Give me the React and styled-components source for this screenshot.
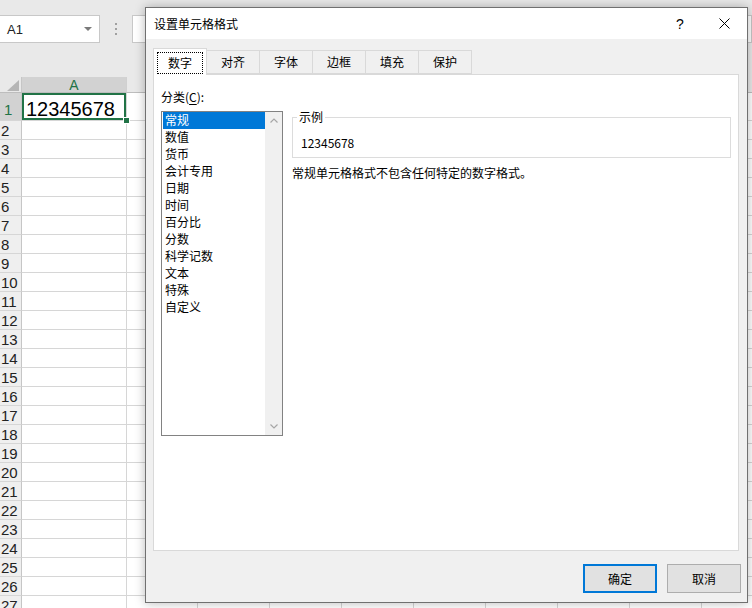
import React from "react";
import styled, { createGlobalStyle } from "styled-components";

const GlobalStyle = createGlobalStyle`
  html, body {
    margin: 0;
    padding: 0;
  }
  body {
    width: 752px;
    height: 608px;
    overflow: hidden;
    background: #ffffff;
    font-family: "Liberation Sans", Arial, sans-serif;
  }
`;

const Screen = styled.div`
  position: relative;
  width: 752px;
  height: 608px;
  overflow: hidden;
  background: #ffffff;
`;

/* ---------- spreadsheet backdrop ---------- */

const Toolbar = styled.div`
  display: flex;
  align-items: flex-start;
  height: 77px;
  padding-top: 15px;
  box-sizing: border-box;
  background: #e9e9e9;
`;

const NameBox = styled.div`
  display: flex;
  align-items: center;
  justify-content: space-between;
  width: 101px;
  height: 28px;
  margin-left: -1px;
  box-sizing: border-box;
  padding: 0 7px 0 7px;
  background: #ffffff;
  border: 1px solid #c8c8c8;
  font-size: 13px;
  color: #222;
`;

const Caret = styled.span`
  width: 0;
  height: 0;
  border-left: 4px solid transparent;
  border-right: 4px solid transparent;
  border-top: 4px solid #7a7a7a;
`;

const Dots = styled.div`
  display: flex;
  flex-direction: column;
  align-items: center;
  justify-content: center;
  gap: 3px;
  width: 32px;
  height: 28px;
  & span {
    width: 2px;
    height: 2px;
    background: #a0a0a0;
  }
`;

const FormulaBox = styled.div`
  flex: 1;
  height: 28px;
  box-sizing: border-box;
  background: #ffffff;
  border: 1px solid #c8c8c8;
`;

const Grid = styled.div`
  display: flex;
  flex-direction: column;
`;

const GridRow = styled.div`
  display: flex;
  flex: none;
  height: ${(p) => p.$h}px;
`;

const Corner = styled.div`
  display: flex;
  align-items: flex-end;
  justify-content: flex-end;
  width: 22px;
  flex: none;
  box-sizing: border-box;
  padding: 0 2px 1px 0;
  background: #e9e9e9;
  border-right: 1px solid #c6c6c6;
  border-bottom: 1px solid #bdbdbd;
  & span {
    width: 0;
    height: 0;
    border-left: 12px solid transparent;
    border-bottom: 11px solid #b5b5b5;
  }
`;

const ColHeader = styled.div`
  display: flex;
  align-items: center;
  justify-content: center;
  flex: none;
  width: ${(p) => p.$w}px;
  box-sizing: border-box;
  padding-top: 1px;
  background: ${(p) => (p.$active ? "#d2d2d2" : "#e9e9e9")};
  color: ${(p) => (p.$active ? "#217346" : "#333")};
  border-right: 1px solid #d0d0d0;
  border-bottom: 1px solid #bdbdbd;
  font-size: 14px;
`;

const RowHeader = styled.div`
  display: flex;
  align-items: ${(p) => (p.$active ? "flex-end" : "center")};
  width: 22px;
  flex: none;
  box-sizing: border-box;
  padding: 0 0 ${(p) => (p.$active ? "2px" : "0")} ${(p) => (p.$active ? "4px" : "1px")};
  overflow: hidden;
  background: ${(p) => (p.$active ? "#d2d2d2" : "#efefef")};
  color: ${(p) => (p.$active ? "#217346" : "#222")};
  border-right: 1px solid #c6c6c6;
  border-bottom: 1px solid #d6d6d6;
  font-size: 15px;
  line-height: 17px;
`;

const Cell = styled.div`
  position: relative;
  flex: none;
  width: ${(p) => p.$w}px;
  box-sizing: border-box;
  border-right: 1px solid #d6d6d6;
  border-bottom: 1px solid #d6d6d6;
  ${(p) =>
    p.$active &&
    `
    z-index: 1;
    display: flex;
    align-items: flex-end;
    padding: 0 0 1px 4px;
    font-size: 20px;
    line-height: 20px;
    color: #000;
    box-shadow: inset 0 0 0 2px #217346;
    &::after {
      content: "";
      position: absolute;
      right: -4px;
      bottom: -4px;
      width: 5px;
      height: 5px;
      background: #217346;
      border: 1px solid #ffffff;
    }
  `}
`;

/* ---------- dialog ---------- */

const Dialog = styled.div`
  position: absolute;
  left: 145px;
  top: 7px;
  z-index: 5;
  width: 603px;
  height: 596px;
  box-sizing: border-box;
  display: flex;
  flex-direction: column;
  background: #f0f0f0;
  border: 1px solid #707070;
  box-shadow: 0 0 10px rgba(0, 0, 0, 0.28);
  font-family: "Noto Sans CJK SC", "Liberation Sans", sans-serif;
  font-size: 12px;
  color: #000;
`;

const TitleBar = styled.div`
  display: flex;
  align-items: center;
  height: 31px;
  flex: none;
  padding-left: 8px;
  background: #ffffff;
`;

const Title = styled.div`
  flex: 1;
  line-height: 16px;
`;

const TitleButton = styled.div`
  display: flex;
  align-items: center;
  justify-content: center;
  width: ${(p) => p.$w}px;
  height: 31px;
  font-family: "Liberation Sans", Arial, sans-serif;
  font-size: 14px;
`;

const Body = styled.div`
  display: flex;
  flex-direction: column;
  flex: 1;
  padding: 9px 8px 0 7px;
`;

const TabStrip = styled.div`
  display: flex;
  align-items: flex-end;
  height: 26px;
  flex: none;
`;

const Tab = styled.div`
  position: relative;
  display: flex;
  align-items: center;
  justify-content: center;
  box-sizing: border-box;
  height: ${(p) => (p.$active ? 27 : 24)}px;
  margin-left: ${(p) => (p.$first ? 0 : -1)}px;
  margin-bottom: ${(p) => (p.$active ? -1 : 0)}px;
  padding: ${(p) => (p.$active ? "1px 3px 0" : "0 14px")};
  z-index: ${(p) => (p.$active ? 2 : 1)};
  background: ${(p) => (p.$active ? "#ffffff" : "#f0f0f0")};
  border: 1px solid #d9d9d9;
  border-bottom: ${(p) => (p.$active ? "none" : "1px solid #d9d9d9")};
  line-height: 16px;
`;

const FocusRing = styled.span`
  padding: 2px 10px;
  border: 1px dotted #000;
`;

const Panel = styled.div`
  display: flex;
  height: 477px;
  flex: none;
  box-sizing: border-box;
  padding: 14px 7px 0 7px;
  background: #ffffff;
  border: 1px solid #d9d9d9;
`;

const LeftColumn = styled.div`
  display: flex;
  flex-direction: column;
  width: 122px;
  flex: none;
`;

const Label = styled.div`
  line-height: 16px;
  margin-bottom: 6px;
  & u {
    text-underline-offset: 2px;
  }
`;

const ListBox = styled.div`
  display: flex;
  height: 325px;
  box-sizing: border-box;
  background: #ffffff;
  border: 1px solid #828282;
`;

const Items = styled.div`
  flex: 1;
  padding: 0 0 0 1px;
`;

const Item = styled.div`
  height: 17px;
  line-height: 16px;
  padding-left: 2px;
  background: ${(p) => (p.$active ? "#0078d7" : "transparent")};
  color: ${(p) => (p.$active ? "#ffffff" : "#000")};
`;

const ScrollBar = styled.div`
  display: flex;
  flex-direction: column;
  justify-content: space-between;
  align-items: center;
  width: 17px;
  background: #f0f0f0;
  & svg {
    display: block;
    margin: 6px 0;
  }
`;

const RightColumn = styled.div`
  display: flex;
  flex-direction: column;
  flex: 1;
  margin-left: 9px;
  padding-top: 22px;
`;

const Group = styled.fieldset`
  margin: 0;
  min-width: 0;
  padding: 0 0 0 4px;
  border: 1px solid #dcdcdc;
`;

const Legend = styled.legend`
  padding: 0 2px;
  font-size: 12px;
  line-height: 12px;
`;

const Sample = styled.div`
  padding: 13px 0 7px 4px;
  line-height: 14px;
`;

const Description = styled.div`
  margin-top: 7px;
  line-height: 16px;
`;

const Footer = styled.div`
  display: flex;
  justify-content: flex-end;
  gap: 10px;
  margin: 13px -2px 0 0;
`;

const Button = styled.div`
  display: flex;
  align-items: center;
  justify-content: center;
  width: 74px;
  height: 29px;
  box-sizing: border-box;
  background: #e1e1e1;
  border: ${(p) => (p.$primary ? "2px solid #0078d7" : "1px solid #adadad")};
  line-height: 16px;
`;

const columns = [105, 71, 72, 72, 72, 72, 72, 72, 72, 72];
const tabs = ["数字", "对齐", "字体", "边框", "填充", "保护"];
const categories = [
  "常规",
  "数值",
  "货币",
  "会计专用",
  "日期",
  "时间",
  "百分比",
  "分数",
  "科学记数",
  "文本",
  "特殊",
  "自定义",
];
const rows = Array.from({ length: 27 }, (_, i) => i + 1);

function Chevron({ up }) {
  return (
    <svg width="8" height="5" viewBox="0 0 8 5">
      <path
        d={up ? "M0.5 4.5 L4 1 L7.5 4.5" : "M0.5 0.5 L4 4 L7.5 0.5"}
        fill="none"
        stroke="#a6a6a6"
        strokeWidth="1.2"
      />
    </svg>
  );
}

function Sheet() {
  return (
    <>
      <Toolbar>
        <NameBox>
          A1
          <Caret />
        </NameBox>
        <Dots>
          <span />
          <span />
          <span />
        </Dots>
        <FormulaBox />
      </Toolbar>
      <Grid>
        <GridRow $h={16}>
          <Corner>
            <span />
          </Corner>
          {columns.map((w, i) => (
            <ColHeader key={i} $w={w} $active={i === 0}>
              {String.fromCharCode(65 + i)}
            </ColHeader>
          ))}
        </GridRow>
        {rows.map((r) => (
          <GridRow key={r} $h={r === 1 ? 28 : 19}>
            <RowHeader $active={r === 1}>{r}</RowHeader>
            {columns.map((w, i) => (
              <Cell key={i} $w={w} $active={r === 1 && i === 0}>
                {r === 1 && i === 0 ? "12345678" : null}
              </Cell>
            ))}
          </GridRow>
        ))}
      </Grid>
    </>
  );
}

function FormatDialog() {
  return (
    <Dialog>
      <TitleBar>
        <Title>设置单元格格式</Title>
        <TitleButton $w={42}>?</TitleButton>
        <TitleButton $w={46}>
          <svg width="11" height="11" viewBox="0 0 11 11">
            <path d="M0.5 0.5 L10.5 10.5 M10.5 0.5 L0.5 10.5" stroke="#000" strokeWidth="1" />
          </svg>
        </TitleButton>
      </TitleBar>
      <Body>
        <TabStrip>
          {tabs.map((t, i) =>
            i === 0 ? (
              <Tab key={t} $active $first>
                <FocusRing>{t}</FocusRing>
              </Tab>
            ) : (
              <Tab key={t}>{t}</Tab>
            )
          )}
        </TabStrip>
        <Panel>
          <LeftColumn>
            <Label>
              分类(<u>C</u>):
            </Label>
            <ListBox>
              <Items>
                {categories.map((c, i) => (
                  <Item key={c} $active={i === 0}>
                    {c}
                  </Item>
                ))}
              </Items>
              <ScrollBar>
                <Chevron up />
                <Chevron />
              </ScrollBar>
            </ListBox>
          </LeftColumn>
          <RightColumn>
            <Group>
              <Legend>示例</Legend>
              <Sample>12345678</Sample>
            </Group>
            <Description>常规单元格格式不包含任何特定的数字格式。</Description>
          </RightColumn>
        </Panel>
        <Footer>
          <Button $primary>确定</Button>
          <Button>取消</Button>
        </Footer>
      </Body>
    </Dialog>
  );
}

export default function App() {
  return (
    <Screen>
      <GlobalStyle />
      <Sheet />
      <FormatDialog />
    </Screen>
  );
}
